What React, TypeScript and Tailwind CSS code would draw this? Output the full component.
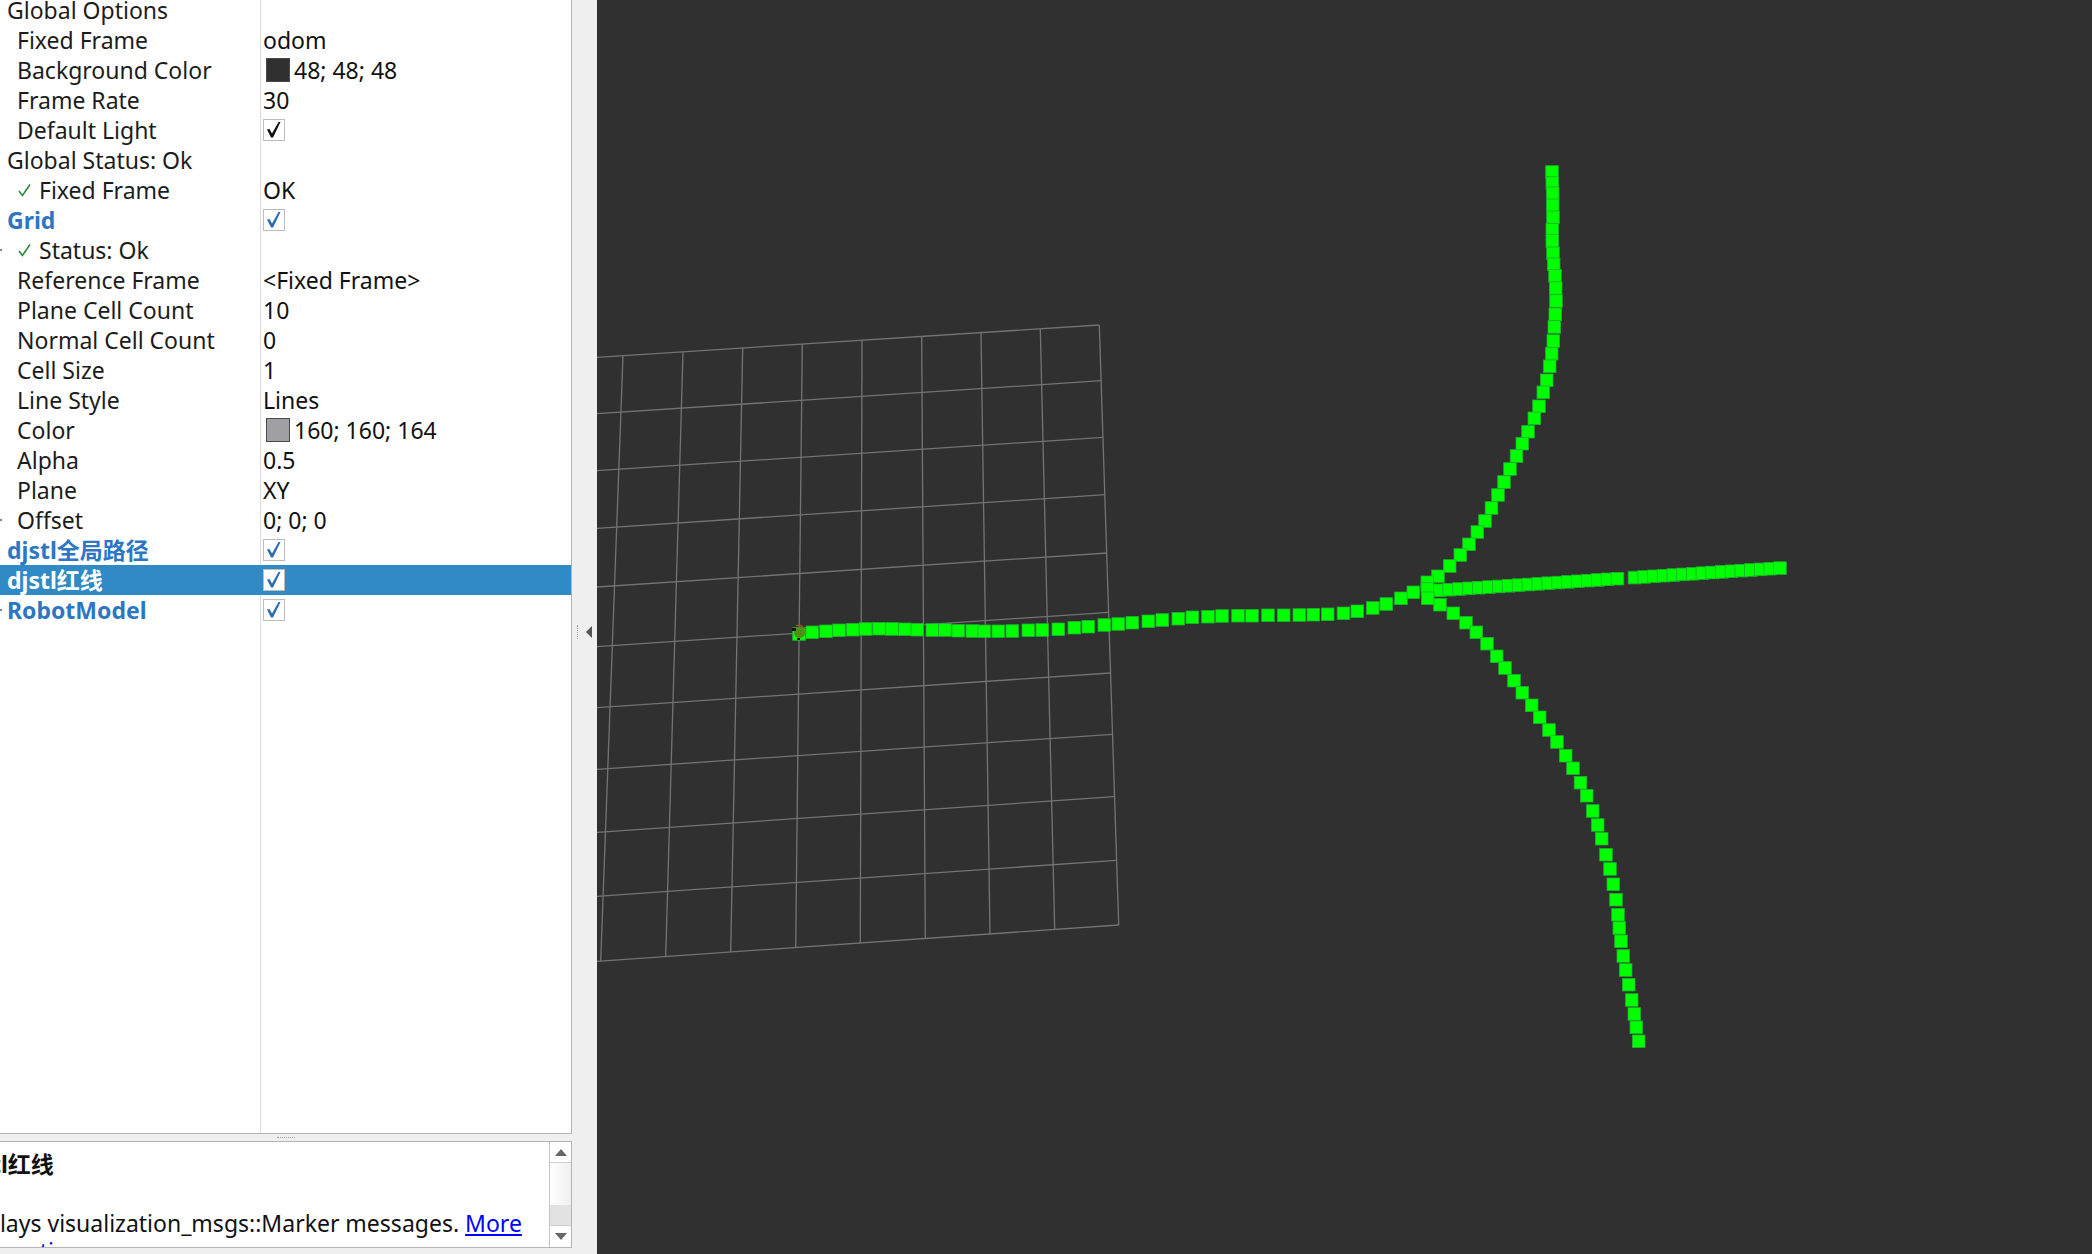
import React from "react";

type Row = {
  name: string;
  indent?: 0 | 1 | 2;
  value?: string;
  swatch?: string;
  check?: "black" | "blue";
  ok?: boolean;
  display?: boolean;
  selected?: boolean;
  mark?: boolean;
};

const rows: Row[] = [
  { name: "Global Options" },
  { name: "Fixed Frame", indent: 1, value: "odom" },
  { name: "Background Color", indent: 1, value: "48; 48; 48", swatch: "bg-[#303030]" },
  { name: "Frame Rate", indent: 1, value: "30" },
  { name: "Default Light", indent: 1, check: "black" },
  { name: "Global Status: Ok" },
  { name: "Fixed Frame", indent: 2, ok: true, value: "OK" },
  { name: "Grid", display: true, check: "blue" },
  { name: "Status: Ok", indent: 2, ok: true, mark: true },
  { name: "Reference Frame", indent: 1, value: "<Fixed Frame>" },
  { name: "Plane Cell Count", indent: 1, value: "10" },
  { name: "Normal Cell Count", indent: 1, value: "0" },
  { name: "Cell Size", indent: 1, value: "1" },
  { name: "Line Style", indent: 1, value: "Lines" },
  { name: "Color", indent: 1, value: "160; 160; 164", swatch: "bg-[#a0a0a4]" },
  { name: "Alpha", indent: 1, value: "0.5" },
  { name: "Plane", indent: 1, value: "XY" },
  { name: "Offset", indent: 1, value: "0; 0; 0", mark: true },
  { name: "djstl全局路径", display: true, check: "blue" },
  { name: "djstl红线", display: true, check: "blue", selected: true },
  { name: "RobotModel", display: true, check: "blue", mark: true },
];

// grid lines read off the screenshot, in page coordinates
const gridAcross = [
  [357.3, 1099.3, 325], [413.7, 1101.3, 380.7], [470.7, 1103, 437.3], [528.3, 1105.3, 494.7],
  [587, 1107, 553], [646.7, 1108.7, 612.3], [707.7, 1110.3, 673], [769.3, 1112.3, 734.3],
  [832.3, 1114.3, 796.7], [896.3, 1116.3, 860.3], [961.3, 1118.7, 925],
];
const gridDown = [
  [623, 355.7, 600.7, 961], [683, 351.7, 665.7, 956.3], [742.7, 347.7, 730.7, 952],
  [802.3, 344, 795.7, 947.7], [862, 340.3, 860.3, 943], [921.7, 336.7, 925.3, 938.3],
  [981, 332.7, 990, 934], [1040.3, 329, 1054.7, 929.7], [1099.3, 325, 1118.7, 925],
];

const mainPath = [
  [799, 634], [812.3, 632.3], [826, 631.3], [839, 630.3], [852.7, 629.7], [865.7, 629], [879, 628.7], [892, 629],
  [905, 629.3], [917.3, 629.7], [932.3, 630], [945, 630], [958.3, 630.7], [972.3, 631], [984.3, 631.3], [998.3, 631.3],
  [1012.3, 631], [1028.3, 630.3], [1042.3, 630], [1058.3, 629.3], [1074.3, 627.7], [1088.3, 626.7], [1104.3, 625],
  [1118.3, 624], [1132.3, 622.7], [1148.3, 621.3], [1162.3, 620], [1178.3, 618.7], [1192.3, 617.3], [1208, 616.7],
  [1222, 616], [1238, 615.7], [1252, 615.7], [1268, 615.3], [1283.7, 615.3], [1299.3, 615], [1313.3, 614.7],
  [1327.7, 614.3], [1343.5, 613.3], [1357.3, 611.3], [1372.7, 608], [1386.3, 604], [1401, 598.3], [1413.3, 592.3],
  [1427.3, 582.3], [1427.3, 589], [1427.7, 598.3],
];
const upperPath = [
  [1552, 172], [1552.3, 183], [1552.7, 193.3], [1552.7, 205.3], [1553, 217.3], [1552.3, 229.7], [1552.3, 241],
  [1553, 253.3], [1553.7, 264.3], [1555, 275.7], [1555.7, 288], [1556, 301], [1555.3, 314.3], [1554.3, 327],
  [1553.3, 341], [1551.7, 353.7], [1549.7, 366.3], [1546.7, 380.3], [1543.3, 392.3], [1539, 406.3], [1534.3, 418.3],
  [1528, 431.7], [1522.3, 443.7], [1516.5, 456], [1510, 469], [1504, 482], [1498, 495], [1491.5, 508], [1485, 521],
  [1477.3, 532], [1469, 544.3], [1460.3, 555], [1449.7, 566], [1438, 576.3],
];
const lowerPath = [
  [1440, 604.7], [1453.3, 613.3], [1466, 622.7], [1476.3, 632.3], [1487, 643.7], [1496.7, 656.3], [1505, 668],
  [1514, 680.7], [1522.3, 692.7], [1531.7, 705.3], [1539.7, 717.3], [1549, 730], [1557, 742], [1565.7, 755.7],
  [1573, 768.3], [1580.5, 782.7], [1586.7, 795.7], [1592.7, 811], [1597.7, 825], [1601.7, 838.7], [1606, 854.7],
  [1610, 869], [1613.3, 884.3], [1616, 899.7], [1618, 914.7], [1619.3, 928], [1621, 941.3], [1623.3, 956],
  [1625.7, 970], [1628.7, 984.7], [1631.7, 1000], [1634.3, 1014], [1636.3, 1027.3], [1638.7, 1041.3],
];
// the straight branch is sampled densely, so it reads as one thick bar with a small gap near x=1626
const rightPath = Array.from({ length: 35 }, (_, i) => {
  const x = i < 19 ? 1439.3 + i * 9.9 : 1634.5 + (i - 19) * 9.7;
  return [x, 590.3 - (x - 1439.3) * 0.0652];
});

const CheckBox = ({ color }: { color: "black" | "blue" }) => (
  <span className="flex h-[22px] w-[22px] items-center justify-center border border-[#bdbdbd] bg-white">
    <svg width="16" height="18" viewBox="0 0 16 18">
      <path
        d="M1 8.5 L3.5 8 L6 12.5 L12.5 1 L14.5 1 L7 16.5 L5 16.5 Z"
        fill={color === "black" ? "#111111" : "#2a6cb0"}
      />
    </svg>
  </span>
);

const TreeRow = ({ row }: { row: Row }) => {
  const pad = row.indent === 1 ? "pl-[17px]" : "pl-[7px]";
  let nameColor = "text-[#1c1c1c]";
  if (row.display) nameColor = row.selected ? "pt-px font-bold text-white" : "pt-px font-bold text-[#2d76c4]";
  return (
    <div className={`relative flex h-[30px] items-center ${row.selected ? "bg-[#2f8ac6]" : ""}`}>
      {row.mark && <span className="absolute left-0 top-[14px] h-[2px] w-[2px] bg-[#888888]" />}
      <div
        className={`flex h-full w-[261px] shrink-0 items-center whitespace-nowrap border-r ${pad} ${nameColor} ${
          row.selected ? "border-transparent" : "border-[#dcdcdc]"
        }`}
      >
        {row.ok && (
          <span className="ml-[11px] mr-[8px] flex w-[13px]">
            <svg width="13" height="14" viewBox="0 0 13 14" fill="none">
              <path d="M1 8 L4.5 12.5 L12 1.5" stroke="#2e8b3a" strokeWidth="1.6" />
            </svg>
          </span>
        )}
        {row.name}
      </div>
      <div className="flex items-center whitespace-nowrap pl-[2px] text-[#111111]">
        {row.swatch && <span className={`ml-[3px] mr-[4px] h-[24px] w-[24px] border border-[#4a4a4a] ${row.swatch}`} />}
        {row.value}
        {row.check && <CheckBox color={row.check} />}
      </div>
    </div>
  );
};

const Squares = ({ points }: { points: number[][] }) => (
  <>
    {points.map(([x, y], i) => (
      <rect key={i} x={x - 6.3} y={y - 6.3} width="12.6" height="12.6" fill="#00ff00" stroke="#1cb02c" strokeWidth="0.8" />
    ))}
  </>
);

export default function App() {
  return (
    <div className="flex h-[1254px] w-[2092px] overflow-hidden bg-[#efefef] font-['Noto_Sans','Noto_Sans_CJK_SC',sans-serif] text-[23px]">
      <div className="relative flex w-[597px] shrink-0 flex-col">
        <div className="flex h-[1134px] w-[572px] flex-col overflow-hidden border-b border-r border-[#b5b5b5] bg-white">
          <div className="-mt-[5px]">
            {rows.map((r, i) => (
              <TreeRow key={i} row={r} />
            ))}
          </div>
          <div className="ml-[260px] flex-1 border-l border-[#dcdcdc]" />
        </div>
        <div className="flex h-[7px] w-[572px] items-center justify-center">
          <span className="w-[18px] border-t border-dotted border-[#a0a0a0]" />
        </div>
        <div className="flex h-[107px] w-[572px] border border-l-0 border-[#b5b5b5] bg-white">
          <div className="min-w-0 flex-1 overflow-hidden whitespace-nowrap text-[#111111]">
            <div className="-ml-[42px] mt-[5px] font-bold">djstl红线</div>
            <div className="-ml-[48px] mt-[27px] leading-[28px]">
              Displays visualization_msgs::Marker messages.{" "}
              <span className="text-[#0000ff] underline">More</span>
              <div className="text-[#0000ff] underline">Information</div>
            </div>
          </div>
          <div className="flex w-[22px] shrink-0 flex-col border-l border-[#c6c6c6]">
            <div className="flex h-[21px] items-center justify-center border-b border-[#d0d0d0]">
              <span className="h-0 w-0 border-x-[6px] border-b-[7px] border-x-transparent border-b-[#666666]" />
            </div>
            <div className="flex-1 bg-gradient-to-r from-white to-[#efefef]" />
            <div className="h-[20px] bg-[#e2e2e2]" />
            <div className="flex h-[22px] items-center justify-center border-t border-[#d0d0d0]">
              <span className="h-0 w-0 border-x-[6px] border-t-[7px] border-x-transparent border-t-[#666666]" />
            </div>
          </div>
        </div>
        <div className="absolute left-[577px] top-[625px] h-[14px] border-l border-dotted border-[#a8a8a8]" />
        <div className="absolute left-[586px] top-[626px] h-0 w-0 border-y-[6px] border-r-[6px] border-y-transparent border-r-[#555555]" />
      </div>
      <div className="h-full flex-1 bg-[#303030]">
        <svg className="block h-full w-full" viewBox="597 0 1495 1254">
          <g stroke="#737373" strokeWidth="1.3">
            {gridAcross.map(([y1, x2, y2], i) => (
              <line key={i} x1={597} y1={y1} x2={x2} y2={y2} />
            ))}
            {gridDown.map(([x1, y1, x2, y2], i) => (
              <line key={i} x1={x1} y1={y1} x2={x2} y2={y2} />
            ))}
          </g>
          <Squares points={upperPath} />
          <Squares points={lowerPath} />
          <Squares points={rightPath} />
          <Squares points={mainPath} />
          <circle cx="799.5" cy="632.5" r="5.5" fill="#4f8f18" />
          <path d="M796 625.5 L801 625.5 L805 629" stroke="#8a5a20" strokeWidth="1.5" fill="none" />
          <rect x="792" y="628" width="4" height="3" fill="#111111" />
          <rect x="797" y="638" width="3" height="2" fill="#111111" />
        </svg>
      </div>
    </div>
  );
}
